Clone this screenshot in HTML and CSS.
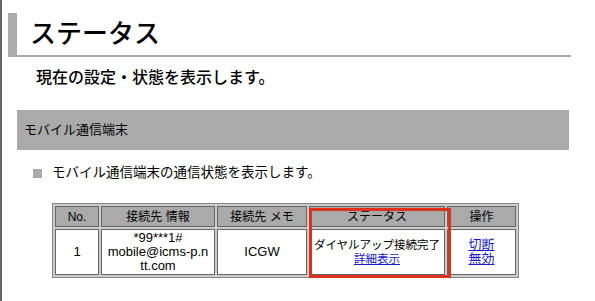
FILE: index.html
```html
<!DOCTYPE html>
<html lang="ja">
<head>
<meta charset="UTF-8">
<link rel="stylesheet" href="styles.css">
<title>ステータス</title>
</head>
<body>
  <div class="page">
    <h1 class="title">ステータス</h1>
    <p class="lead">現在の設定・状態を表示します。</p>

    <div class="section">モバイル通信端末</div>
    <p class="note"><span class="mark"></span>モバイル通信端末の通信状態を表示します。</p>

    <div class="table-wrap">
      <table class="list">
        <colgroup>
          <col style="width:44px">
          <col style="width:114px">
          <col style="width:90px">
          <col style="width:136px">
          <col style="width:69px">
        </colgroup>
        <tr>
          <th>No.</th>
          <th>接続先 情報</th>
          <th>接続先 メモ</th>
          <th>ステータス</th>
          <th>操作</th>
        </tr>
        <tr>
          <td>1</td>
          <td>*99***1#<br>mobile@icms-p.n<br>tt.com</td>
          <td>ICGW</td>
          <td class="status">ダイヤルアップ接続完了<br><a href="#">詳細表示</a></td>
          <td><a href="#">切断</a><br><a href="#">無効</a></td>
        </tr>
      </table>
      <div class="highlight"></div>
    </div>
  </div>
</body>
</html>
```

FILE: styles.css
```css
body {
  margin: 0;
  background-color: #fff;
  color: #000;
  font-family: "Liberation Sans", "Noto Sans CJK JP", sans-serif;
}

.page {
  border-left: 2px solid #666;
  min-height: 301px;
  padding-top: 13px;
  box-sizing: border-box;
}

.title {
  margin: 0 24px 0 6px;
  height: 44px;
  border-left: 9px solid #aaa;
  border-bottom: 2px solid #aaa;
  padding-left: 13px;
  font-size: 26px;
  font-weight: 500;
  line-height: 42px;
  box-sizing: border-box;
}

.lead {
  margin: 11px 0 0 34px;
  font-size: 16px;
  font-weight: 500;
  line-height: 20px;
}

.section {
  margin: 22px 26px 0 15px;
  height: 40px;
  padding-left: 7px;
  background-color: #aaa;
  font-size: 13px;
  line-height: 40px;
}

.note {
  display: flex;
  align-items: center;
  margin: 13px 0 0 31px;
  font-size: 13.5px;
  line-height: 20px;
}

.mark {
  width: 9px;
  height: 9px;
  margin-right: 10px;
  background-color: #aaa;
}

.table-wrap {
  position: relative;
  width: 467px;
  margin: 20px 0 0 50px;
}

.list {
  width: 467px;
  table-layout: fixed;
  border-collapse: separate;
  border-spacing: 2px;
  border: 1px solid #888;
  background-color: #ccc;
  font-size: 12px;
}

.list th,
.list td {
  border: 1px solid #666;
  text-align: center;
  padding: 0;
}

.list th {
  height: 19px;
  padding-top: 2px;
  background-color: #aaa;
  font-weight: normal;
  line-height: 17px;
  box-sizing: border-box;
}

.list td {
  height: 44px;
  background-color: #fff;
  font-size: 13px;
  line-height: 14px;
}

.list .status {
  font-size: 11.5px;
  white-space: nowrap;
}

.list a {
  color: #1a1acc;
}

.highlight {
  position: absolute;
  left: 257px;
  top: 5px;
  width: 136px;
  height: 64px;
  border: 3px solid #e0301e;
}
```
